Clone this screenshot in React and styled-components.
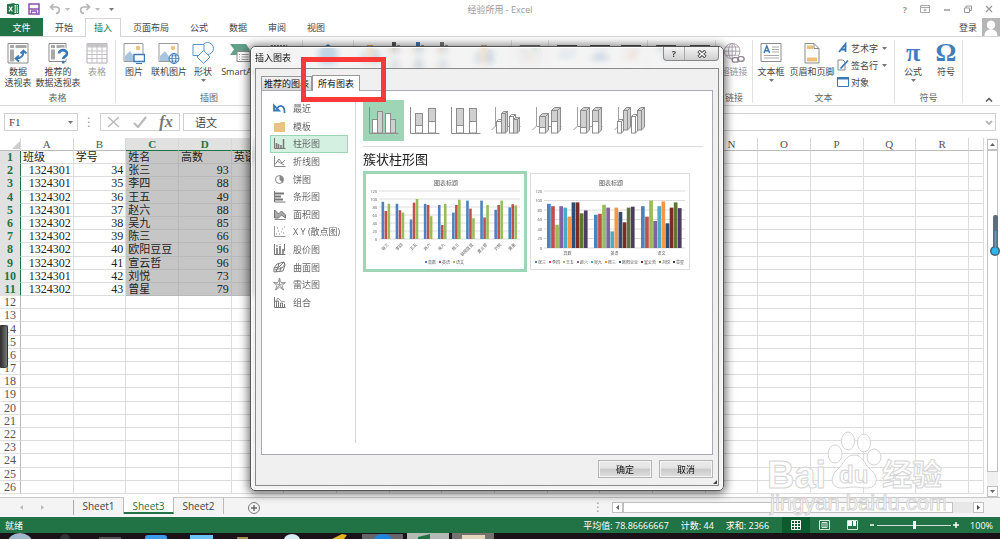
import { useState } from 'react';
import styled, { createGlobalStyle, css } from 'styled-components';

const uiFont = '"Open Sans", "Noto Sans CJK SC", sans-serif';
const cellFont = '"Liberation Serif", "Noto Sans CJK SC", serif';
const green = '#217346';

const columns = 'ABCDEFGHIJKLMNOPQR'.split('');
const rowNumbers = Array.from({ length: 26 }, (_, i) => i + 1);

const sheetData = [
  ['班级', '学号', '姓名', '高数', '英语'],
  [1324301, 34, '张三', 93],
  [1324301, 35, '李四', 88],
  [1324302, 36, '王五', 49],
  [1324301, 37, '赵六', 88],
  [1324302, 38, '吴九', 85],
  [1324302, 39, '陈三', 66],
  [1324302, 40, '欧阳豆豆', 96],
  [1324302, 41, '宣云哲', 96],
  [1324301, 42, '刘悦', 73],
  [1324302, 43, '曾星', 79],
];

const students = sheetData.slice(1).map((row) => row[2]);
const scores = [
  { name: '高数', values: [93, 88, 49, 88, 85, 66, 96, 96, 73, 79] },
  { name: '英语', values: [70, 72, 91, 85, 35, 85, 76, 54, 85, 87] },
  { name: '语文', values: [88, 66, 100, 57, 88, 98, 52, 85, 96, 84] },
];
const seriesColors = [
  '#4f81bd', '#c0504d', '#9bbb59', '#8064a2', '#4bacc6',
  '#f79646', '#2c4d75', '#772c2a', '#5f7530', '#4d3b62',
];

const menuTabs = ['开始', '插入', '页面布局', '公式', '数据', '审阅', '视图'];

const chartTypes = [
  { name: '最近', icon: 'recent' },
  { name: '模板', icon: 'folder' },
  { name: '柱形图', icon: 'column' },
  { name: '折线图', icon: 'line' },
  { name: '饼图', icon: 'pie' },
  { name: '条形图', icon: 'bar' },
  { name: '面积图', icon: 'area' },
  { name: 'X Y (散点图)', icon: 'scatter' },
  { name: '股价图', icon: 'stock' },
  { name: '曲面图', icon: 'surface' },
  { name: '雷达图', icon: 'radar' },
  { name: '组合', icon: 'combo' },
];

/* ---------- icons ---------- */

const Svg = ({ w, h = w, children }) => (
  <svg width={w} height={h} viewBox={`0 0 ${w} ${h}`} fill="none" aria-hidden="true">
    {children}
  </svg>
);

const PivotIcon = () => (
  <Svg w={22}>
    <path d="M1 1.500h20v19.500h-20z" fill="#fff" stroke="#8a8a8a" />
    <path d="M3 3h4v3h-4zM8.500 3h11v3h-11zM3 7.500h4v12h-4z" fill="#a8a8a8" />
    <path d="M9 16.500c5 0 7.500-2.500 7.500-7M13.500 11.500l3-3 3 3M12 13.500l-3.500 3 3.500 3" stroke="#3a78b8" strokeWidth="1.800" />
  </Svg>
);

const PivotHelpIcon = () => (
  <Svg w={22}>
    <path d="M2 1.500h17v18h-17z" fill="#fff" stroke="#8a8a8a" />
    <path d="M4 3h4v3h-4zM9.500 3h8v3h-8zM4 7.500h4v10h-4z" fill="#a8a8a8" />
    <path d="M11.500 11.500c0-5 8.500-4.500 8.500 0 0 3-3.800 2.800-3.800 6" stroke="#fff" strokeWidth="5" />
    <path d="M12 11.500c0-4.500 8-4.500 8 0 0 3-3.800 2.800-3.800 5.500M16.200 18.800v2.700" stroke="#3a78b8" strokeWidth="2.600" />
  </Svg>
);

const TableIcon = () => (
  <Svg w={22}>
    <path d="M1 1.500h20v19.500h-20z" fill="#fff" stroke="#b0aeb0" />
    <path d="M1 1.500h20v4h-20z" fill="#c9c5c9" />
    <path d="M1 9h20M1 12.500h20M1 16.500h20M6 1.500v19.500M11 1.500v19.500M16 1.500v19.500" stroke="#c4c0c4" />
  </Svg>
);

const PictureIcon = ({ online }) => (
  <Svg w={22}>
    <path d="M1 1.500h19v18h-19z" fill="#fff" stroke="#9a9a9a" />
    <circle cx="15" cy="6" r="2.200" fill="#eec17c" />
    <path d="M2 19v-5l5-5 7 10z" fill="#a9c4de" />
    {online ? (
      <g stroke="#3a78b8">
        <circle cx="16" cy="16.500" r="5" fill="#fff" />
        <ellipse cx="16" cy="16.500" rx="2" ry="5" />
        <path d="M11 16.500h10M12 13.800h8M12 19.200h8" strokeWidth=".7" />
      </g>
    ) : (
      <g>
        <path d="M11 12.500h10.500v7h-10.500z" fill="#fff" stroke="#3a78b8" strokeWidth="1.400" />
        <path d="M13 21.500h6" stroke="#3a78b8" />
      </g>
    )}
  </Svg>
);

const ShapesIcon = () => (
  <Svg w={24} h={22}>
    <g fill="#fff" stroke="#5b92c9">
      <circle cx="16.500" cy="6.500" r="6" />
      <path d="M2 2.500h11v11h-11z" />
      <path d="M12.500 8.500l6.500 6.500-6.500 6.500-6.500-6.500z" />
    </g>
  </Svg>
);

const SmartArtIcon = () => (
  <Svg w={22}>
    <path d="M1 2h16l4 6-4 5h-16l4-5.500z" fill="#62a18a" />
    <path d="M8 9.500h13v10h-13z" fill="#fff" stroke="#8a8a8a" />
    <path d="M10 12.500h1M12.500 12.500h7M10 15h1M12.500 15h7M10 17.500h1M12.500 17.500h7" stroke="#8a8a8a" strokeWidth=".8" />
  </Svg>
);

const ScreenshotIcon = () => (
  <Svg w={20} h={22}>
    <path d="M2 1.500h16v16h-16z" stroke="#777" strokeDasharray="2 1" />
    <path d="M6 9h8v5h-8z" fill="#bbb" />
  </Svg>
);

const StoreIcon = () => (
  <Svg w={22}>
    <path d="M1 7l10-7 10 7-2 13h-16z" fill="#3f8fca" />
  </Svg>
);

const BigChartIcon = () => (
  <Svg w={22}>
    <path d="M1 8h5v12h-5z" fill="#82a9cf" />
    <path d="M7 1h6v19h-6z" fill="#e4b468" />
    <path d="M14 6h5v14h-5z" fill="#3f79b4" />
  </Svg>
);

const MiniChartIcon = ({ accent }) => (
  <Svg w={12}>
    <path d="M0 5h3v6h-3z" fill="#e4b468" />
    <path d="M4 0h4v11h-4z" fill={accent} />
    <path d="M9 3h3v8h-3z" fill="#999" />
  </Svg>
);

const MapIcon = () => (
  <Svg w={22}>
    <path d="M1 1.500h20v17h-20z" fill="#fff" stroke="#777" />
    <path d="M4 6h4v4h-4zM13 4h5v5h-5z" fill="#6fb594" />
    <path d="M8 10h5v5h-5z" fill="#e3a46d" />
  </Svg>
);

const SparkIcon = ({ color, d }) => (
  <Svg w={22}>
    <path d="M1 2h20" stroke="#555" strokeWidth="2" />
    <path d={d} stroke={color} strokeWidth="3" />
  </Svg>
);

const LinkIcon = () => (
  <Svg w={24} h={24}>
    <g stroke="#a79da7">
      <circle cx="10" cy="10" r="8.500" />
      <ellipse cx="10" cy="10" rx="4" ry="8.500" />
      <path d="M1.500 10h17M3 5.500h14M3 14.500h14M10 1.500v17" />
    </g>
    <path d="M12 20a2.500 2.500 0 0 1 2.500-3h2a2.500 2.500 0 0 1 1.500 4M23 19a2.500 2.500 0 0 1-2.500 3h-2a2.500 2.500 0 0 1-1.500-4" stroke="#fff" strokeWidth="4" />
    <rect x="10" y="17" width="7" height="5" rx="2.500" stroke="#8f858f" strokeWidth="1.500" />
    <rect x="16" y="16" width="7" height="5" rx="2.500" stroke="#8f858f" strokeWidth="1.500" />
  </Svg>
);

const TextBoxIcon = () => (
  <Svg w={22}>
    <path d="M1 1.500h20v18h-20z" fill="#fff" stroke="#8a8a8a" />
    <path d="M4 11l2.800-7 2.800 7M5 8.700h3.600" stroke="#3a78b8" strokeWidth="1.400" />
    <path d="M12 5h7M12 7.500h7M12 10h7M4 13.500h15M4 16h15" stroke="#aaa" />
  </Svg>
);

const HeaderIcon = () => (
  <Svg w={18} h={22}>
    <path d="M2 1.500h9l5 5v14.500h-14z" fill="#fff" stroke="#8a8a8a" />
    <path d="M11 1.500v5h5" stroke="#8a8a8a" />
    <path d="M4 3.500h6v3.500h-6zM4 15.500h10v4h-10z" fill="#ecc07a" />
  </Svg>
);

const WordArtIcon = () => (
  <Svg w={12}>
    <path d="M2 10l6.500-8v8M4.500 7.500h4" stroke="#3a78b8" strokeWidth="1.800" />
  </Svg>
);

const SignIcon = () => (
  <Svg w={12}>
    <path d="M1 1h5l2 2v8h-7z" fill="#fff" stroke="#888" />
    <path d="M3.500 9.500l7.500-8" stroke="#3a78b8" strokeWidth="1.800" />
  </Svg>
);

const ObjectIcon = () => (
  <Svg w={12}>
    <path d="M.5 1.500h11v9h-11z" fill="#fff" stroke="#3a78b8" />
    <path d="M0 1h12v2.500h-12z" fill="#3a78b8" />
  </Svg>
);

const ExcelIcon = () => (
  <Svg w={12}>
    <path d="M7 1.500h4.500v9h-4.500" fill="#fff" stroke={green} />
    <path d="M7 4h4.500M7 6h4.500M7 8h4.500M9.500 1.500v9" stroke={green} strokeWidth=".7" />
    <path d="M0 1.200l7.500-1.200v12l-7.500-1.200z" fill={green} />
    <path d="M2 3.700l3.400 4.600M5.400 3.700l-3.400 4.600" stroke="#fff" strokeWidth="1.100" />
  </Svg>
);

const SaveIcon = () => (
  <Svg w={12}>
    <path d="M1 1h10v10h-10z" stroke="#8a4fb0" strokeWidth="1.500" />
    <path d="M1 6h10M3.500 11v-3h5v3" stroke="#8a4fb0" strokeWidth="1.300" />
  </Svg>
);

const UndoIcon = () => (
  <Svg w={12}>
    <path d="M4.500 1l-3 3 3 3M1.500 4h5.500c5 0 4 6 0 6.500" stroke="#b3b3b3" strokeWidth="1.600" />
  </Svg>
);

const RedoIcon = () => (
  <Svg w={12}>
    <path d="M7.500 1l3 3-3 3M10.500 4h-5.500c-5 0-4 6 0 6.500" stroke="#b3b3b3" strokeWidth="1.600" />
  </Svg>
);

const Caret = ({ color = '#777' }) => (
  <Svg w={5} h={3}>
    <path d="M0 0h5l-2.500 3z" fill={color} />
  </Svg>
);

const typeIconShapes = {
  recent: (
    <path d="M1 3.500v5h5zM4 6.500c3-4.500 8-3 7.500 4.500" fill="none" stroke="#3a78b8" strokeWidth="1.800" />
  ),
  folder: <path d="M1 3h6l1-1h4v10h-11z" fill="#eac282" />,
  column: (
    <>
      <path d="M1.500 1v10.500h11" stroke="#777" />
      <path d="M3.500 11v-5M5.500 11v-4M8 11v-3M10.500 11v-9" stroke="#777" strokeWidth="1.500" />
    </>
  ),
  line: <path d="M1.500 1v10.500h11M2 9.500l4-5.500 3 4 3-3M4 6l7 4" stroke="#888" />,
  pie: (
    <>
      <circle cx="6.500" cy="6.500" r="4" stroke="#888" />
      <path d="M6.500 6.500v-4a4 4 0 0 1 2.500 7z" fill="#888" />
    </>
  ),
  bar: (
    <>
      <path d="M1.500 1v11h11" stroke="#777" />
      <path d="M2 3.500h9M2 6.500h6M2 9.500h8" stroke="#777" strokeWidth="1.800" />
    </>
  ),
  area: (
    <>
      <path d="M1.500 11.500h11" stroke="#888" />
      <path d="M1.500 10v-8l4 4 3-3 4 4v3l-4-3-3 3z" fill="#aaa" stroke="#777" />
    </>
  ),
  scatter: (
    <>
      <path d="M1.500 1v10.500h11" stroke="#999" />
      <path d="M3 9h1M5 6h1M6 9h1M8 7h1M9 4h1M11 2h1M4 3h1M10 8h1" stroke="#888" strokeWidth="1.200" />
    </>
  ),
  stock: (
    <>
      <path d="M1.500 1v10.500h11" stroke="#777" />
      <path d="M4 11v-6M7 11v-8M10 11v-5" stroke="#777" strokeWidth="1.600" />
      <path d="M4 4v-2M7 2v-1M11.500 8v-7" stroke="#777" />
    </>
  ),
  surface: (
    <path d="M1 11v-4l3-4 7-2 1 3-2 6zM1 7l5-1 5-5M2 9l7-2 3-4M3 11l2-5 1-4M7 10l1-4" stroke="#777" />
  ),
  radar: (
    <path d="M6.500 0l1.500 4.500h4.500l-3.500 3 1.500 4.500-4-2.800-4 2.800 1.500-4.500-3.500-3h4.500zM6.500 0v7M1 4.500l5.500 2.500 5.500-2.500M2.500 12l4-5 4 5" stroke="#888" strokeWidth=".8" />
  ),
  combo: (
    <>
      <path d="M1.500 1v10.500h11" stroke="#777" />
      <path d="M3.500 11v-6h2v6M7.500 11v-4h2v4M11.500 11v-3" stroke="#777" />
      <path d="M2 6l3-4 3 3 4 1" stroke="#999" />
    </>
  ),
};

const grayFill = '#d0d0d0';

const FlatBar = ({ x, y, w, split, bottom = 33, fill = '#fff' }) => (
  <g stroke="#8c8c8c">
    <rect x={x} y={y} width={w} height={bottom - y} fill={fill} />
    {split && <rect x={x} y={y} width={w} height={split - y} fill={grayFill} />}
  </g>
);

const SolidBar = ({ x, y, w, split, bottom = 33, depth = 3, fill = '#fff' }) => (
  <g>
    <FlatBar x={x} y={y} w={w} split={split} bottom={bottom} fill={fill} />
    <path
      d={`M${x} ${y}l${depth}-${depth}h${w}l-${depth} ${depth}zM${x + w} ${y}l${depth}-${depth}v${bottom - y}l-${depth} ${depth}z`}
      fill={fill === '#fff' && !split ? '#fff' : grayFill}
      stroke="#8c8c8c"
    />
  </g>
);

const flatAxis = <path d="M6.500 7v26.500h29" stroke="#8c8c8c" />;
const deepAxis = <path d="M9.500 7v19l-4 4M9.500 26.500h25" stroke="#a0a0a0" />;

const subtypes = [
  {
    name: '簇状柱形图',
    art: (
      <>
        {flatAxis}
        <FlatBar x={9.5} y={19.5} w={5} />
        <FlatBar x={14.5} y={11.5} w={5} fill={grayFill} />
        <FlatBar x={22.5} y={13.5} w={5} />
        <FlatBar x={27.5} y={19.5} w={5} fill={grayFill} />
      </>
    ),
  },
  {
    name: '堆积柱形图',
    art: (
      <>
        {flatAxis}
        <FlatBar x={11.5} y={13.5} w={7} split={25.5} />
        <FlatBar x={24.5} y={8.5} w={7} split={21.5} />
      </>
    ),
  },
  {
    name: '百分比堆积柱形图',
    art: (
      <>
        {flatAxis}
        <FlatBar x={11.5} y={8.5} w={7} split={25.5} />
        <FlatBar x={24.5} y={8.5} w={7} split={21.5} />
      </>
    ),
  },
  {
    name: '三维簇状柱形图',
    art: (
      <>
        {deepAxis}
        <SolidBar x={10.5} y={21.5} w={5} depth={2} />
        <SolidBar x={15.5} y={13.5} w={4} depth={2} fill={grayFill} />
        <SolidBar x={23.5} y={16.5} w={4} depth={2} />
        <SolidBar x={27.5} y={19.5} w={4} depth={2} fill={grayFill} />
      </>
    ),
  },
  {
    name: '三维堆积柱形图',
    art: (
      <>
        {deepAxis}
        <SolidBar x={12.5} y={16.5} w={6} split={27.5} />
        <SolidBar x={24.5} y={10.5} w={6} split={21.5} />
      </>
    ),
  },
  {
    name: '三维百分比堆积柱形图',
    art: (
      <>
        {deepAxis}
        <SolidBar x={12.5} y={10.5} w={6} split={27.5} />
        <SolidBar x={24.5} y={10.5} w={6} split={21.5} />
      </>
    ),
  },
  {
    name: '三维柱形图',
    art: (
      <>
        {deepAxis}
        <SolidBar x={14.5} y={10.5} w={4} bottom={30} fill={grayFill} />
        <SolidBar x={8.5} y={21.5} w={4} depth={2} />
        <SolidBar x={28.5} y={10.5} w={4} bottom={30} fill={grayFill} />
        <SolidBar x={22.5} y={16.5} w={4} depth={2} />
      </>
    ),
  },
];

/* ---------- chart preview ---------- */

// One group of bars per label, one colour per series
const PreviewChart = ({ labels, series, baseline, step, barWidth, slanted }) => {
  const left = 13;
  const slot = 141 / labels.length;
  const start = (slot - barWidth * series.length) / 2;
  const legendWidths = series.map((item) => item.name.length * 4 + 6);
  const legendTotal = legendWidths.reduce((sum, w) => sum + w, 0);
  const legendX = (j) => (160 - legendTotal) / 2 + legendWidths.slice(0, j).reduce((sum, w) => sum + w, 0);

  return (
    <PreviewSvg viewBox="0 0 158 95" aria-hidden="true">
      <text x="80" y="11" textAnchor="middle" fontSize="6">图表标题</text>
      {[0, 20, 40, 60, 80, 100, 120].map((tick, i) => (
        <g key={tick}>
          <path d={`M${left} ${baseline - i * step}h141`} stroke="#dcdcdc" />
          <text x="11" y={baseline - i * step + 1.5} textAnchor="end" fontSize="4">{tick}</text>
        </g>
      ))}
      {labels.map((label, i) => (
        <g key={label}>
          {series.map((item, j) => {
            const height = (item.values[i] * step) / 20;
            return (
              <rect
                key={item.name}
                x={left + i * slot + start + j * barWidth}
                y={baseline - height}
                width={barWidth - 0.4}
                height={height}
                fill={seriesColors[j]}
              />
            );
          })}
          {slanted ? (
            <text
              fontSize="4"
              textAnchor="end"
              transform={`translate(${left + (i + 0.7) * slot} ${baseline + 6}) rotate(-45)`}
            >
              {label}
            </text>
          ) : (
            <text x={left + (i + 0.5) * slot} y={baseline + 7} textAnchor="middle" fontSize="4">
              {label}
            </text>
          )}
        </g>
      ))}
      {series.map((item, j) => (
        <g key={item.name}>
          <rect x={legendX(j)} y="87" width="2" height="2" fill={seriesColors[j]} />
          <text x={legendX(j) + 3} y="90" fontSize="4">{item.name}</text>
        </g>
      ))}
    </PreviewSvg>
  );
};

/* ---------- page parts ---------- */

const RibbonItem = ({ icon, lines, width, muted, arrow, name }) => (
  <BigButton $width={width} $muted={muted} aria-label={name}>
    {icon}
    {lines && <span>{lines.map((line) => <span key={line}>{line}</span>)}</span>}
    {arrow && <Caret />}
  </BigButton>
);

const Ribbon = () => (
  <RibbonBar>
    <Group $width={116}>
      <GroupItems>
        <RibbonItem width={36} icon={<PivotIcon />} lines={['数据', '透视表']} />
        <RibbonItem width={44} icon={<PivotHelpIcon />} lines={['推荐的', '数据透视表']} />
        <RibbonItem width={34} icon={<TableIcon />} lines={['表格']} muted />
      </GroupItems>
      <GroupName>表格</GroupName>
    </Group>
    <Group $width={187}>
      <GroupItems>
        <RibbonItem width={36} icon={<PictureIcon />} lines={['图片']} />
        <RibbonItem width={34} icon={<PictureIcon online />} lines={['联机图片']} />
        <RibbonItem width={34} icon={<ShapesIcon />} lines={['形状']} arrow />
        <RibbonItem width={40} icon={<SmartArtIcon />} lines={['SmartArt']} />
        <RibbonItem width={38} icon={<ScreenshotIcon />} name="屏幕截图" />
      </GroupItems>
      <GroupName>插图</GroupName>
    </Group>
    <Group $width={51}>
      <GroupItems>
        <RibbonItem width={50} icon={<StoreIcon />} name="应用程序" />
      </GroupItems>
    </Group>
    <Group $width={158}>
      <GroupItems>
        <RibbonItem width={34} icon={<BigChartIcon />} name="推荐的图表" />
        <MiniGrid>
          {['#555', '#3f79b4', '#777', '#82a9cf', '#3f79b4', '#82a9cf'].map((accent, i) => (
            <SmallButton key={i} aria-label={`图表 ${i + 1}`}>
              <MiniChartIcon accent={accent} />
            </SmallButton>
          ))}
        </MiniGrid>
        <RibbonItem width={50} icon={<BigChartIcon />} name="数据透视图" />
      </GroupItems>
    </Group>
    <Group $width={37}>
      <GroupItems>
        <RibbonItem width={36} icon={<MapIcon />} name="Power View" />
      </GroupItems>
    </Group>
    <Group $width={99}>
      <GroupItems>
        <RibbonItem width={36} icon={<SparkIcon color="#82a9cf" d="M2 14l5-4 5 3 7-5" />} name="折线图" />
        <RibbonItem width={30} icon={<SparkIcon color="#3f79b4" d="M2 14h18M7 11h9" />} name="柱形图" />
        <RibbonItem width={32} icon={<SparkIcon color="#dd7c66" d="M3 13h4M10 9h8M10 14h5" />} name="盈亏" />
      </GroupItems>
    </Group>
    <Group $width={68}>
      <GroupItems>
        <RibbonItem width={36} icon={<SparkIcon color="#9bb9d6" d="M2 6h18M6 12h10" />} name="切片器" />
        <RibbonItem width={31} icon={<SparkIcon color="#aaa" d="M2 6h18M6 12h10" />} name="日程表" />
      </GroupItems>
    </Group>
    <Group $width={37}>
      <GroupItems>
        <RibbonItem width={36} icon={<LinkIcon />} lines={['超链接']} muted />
      </GroupItems>
      <GroupName>链接</GroupName>
    </Group>
    <Group $width={142}>
      <GroupItems>
        <RibbonItem width={36} icon={<TextBoxIcon />} lines={['文本框']} arrow />
        <RibbonItem width={46} icon={<HeaderIcon />} lines={['页眉和页脚']} />
        <SmallList>
          <SmallButton><WordArtIcon />艺术字<Caret /></SmallButton>
          <SmallButton><SignIcon />签名行<Caret /></SmallButton>
          <SmallButton><ObjectIcon />对象</SmallButton>
        </SmallList>
      </GroupItems>
      <GroupName>文本</GroupName>
    </Group>
    <Group $width={68}>
      <GroupItems>
        <RibbonItem width={36} icon={<Glyph>π</Glyph>} lines={['公式']} arrow />
        <RibbonItem width={30} icon={<Glyph>Ω</Glyph>} lines={['符号']} />
      </GroupItems>
      <GroupName>符号</GroupName>
    </Group>
    <CollapseButton aria-label="折叠功能区">
      <Svg w={8} h={5}><path d="M1 4.500l3-3 3 3" stroke="#555" strokeWidth="1.500" /></Svg>
    </CollapseButton>
  </RibbonBar>
);

const isSelected = (col, row) => col >= 2 && col <= 5 && row <= 11;

const Sheet = () => (
  <SheetArea>
    <GridPane>
      <Grid>
        <colgroup>
          <RowHeadCol />
          {columns.map((name) => <col key={name} />)}
          <EdgeCol />
        </colgroup>
        <thead>
          <tr>
            <Corner aria-label="全选">
              <Svg w={9}><path d="M9 1v8h-8z" fill="#ccc" /></Svg>
            </Corner>
            {columns.map((name, i) => (
              <ColHead key={name} scope="col" $on={isSelected(i, 1)}>{name}</ColHead>
            ))}
            <ColHead as="td" />
          </tr>
        </thead>
        <tbody>
          {rowNumbers.map((row) => (
            <tr key={row}>
              <RowHead scope="row" $on={row <= 11}>{row}</RowHead>
              {columns.map((name, i) => {
                const value = sheetData[row - 1]?.[i];
                return (
                  <Cell key={name} $on={isSelected(i, row)} $number={typeof value === 'number'}>
                    {value}
                  </Cell>
                );
              })}
              <Cell />
            </tr>
          ))}
        </tbody>
      </Grid>
    </GridPane>
    <VerticalScroll>
      <ScrollButton aria-label="向上滚动">
        <Svg w={5} h={3}><path d="M0 3h5l-2.500-3z" fill="#666" /></Svg>
      </ScrollButton>
      <VerticalThumb />
      <ScrollButton aria-label="向下滚动"><Caret color="#666" /></ScrollButton>
    </VerticalScroll>
  </SheetArea>
);

const ChartDialog = () => {
  const [type, setType] = useState('柱形图');
  const [subtype, setSubtype] = useState('簇状柱形图');

  return (
    <Dialog role="dialog" aria-label="插入图表">
      <DialogTitle>
        <span>插入图表</span>
        <WindowButtons>
          <button aria-label="帮助">?</button>
          <button aria-label="关闭">
            <Svg w={10} h={8}>
              <path d="M1.500 1l7 6M8.500 1l-7 6" stroke="#555" strokeWidth="3.500" />
              <path d="M2 1.500l6 5M8 1.500l-6 5" stroke="#fff" strokeWidth="1.500" />
            </Svg>
          </button>
        </WindowButtons>
      </DialogTitle>
      <DialogBody>
        <DialogTabs role="tablist">
          <DialogTab role="tab" aria-selected="false">推荐的图表</DialogTab>
          <DialogTab role="tab" aria-selected="true" $active>所有图表</DialogTab>
          <Highlight />
        </DialogTabs>
        <Panel>
          <TypeList>
            {chartTypes.map((item) => (
              <TypeButton key={item.name} $active={item.name === type} onClick={() => setType(item.name)}>
                <Svg w={13}>{typeIconShapes[item.icon]}</Svg>
                {item.name}
              </TypeButton>
            ))}
          </TypeList>
          <TypeDetail>
            <SubtypeRow>
              {subtypes.map((item) => (
                <SubtypeButton
                  key={item.name}
                  aria-label={item.name}
                  $active={item.name === subtype}
                  onClick={() => setSubtype(item.name)}
                >
                  <Svg w={41}>{item.art}</Svg>
                </SubtypeButton>
              ))}
            </SubtypeRow>
            <SubtypeName>{subtype}</SubtypeName>
            <Previews>
              <PreviewButton $active aria-label="按学生预览">
                <PreviewChart labels={students} series={scores} baseline={65} step={8} barWidth={3} slanted />
              </PreviewButton>
              <PreviewButton aria-label="按科目预览">
                <PreviewChart
                  labels={scores.map((s) => s.name)}
                  series={students.map((name, i) => ({ name, values: scores.map((s) => s.values[i]) }))}
                  baseline={74}
                  step={9.5}
                  barWidth={4.1}
                />
              </PreviewButton>
            </Previews>
          </TypeDetail>
        </Panel>
        <DialogFooter>
          <DialogButton>确定</DialogButton>
          <DialogButton>取消</DialogButton>
        </DialogFooter>
        <ResizeGrip />
      </DialogBody>
    </Dialog>
  );
};

const Watermark = () => (
  <WatermarkSvg viewBox="0 0 180 90" aria-hidden="true">
    <g fill="#fff" fillOpacity=".8" stroke="#d4d4d4">
      <text x="1" y="58" fontSize="38" fontWeight="bold">Bai</text>
      <ellipse cx="69" cy="24" rx="7" ry="9" />
      <ellipse cx="82" cy="11" rx="6.500" ry="9" />
      <ellipse cx="98" cy="13" rx="6.500" ry="9" />
      <ellipse cx="108" cy="27" rx="7" ry="8" />
      <path d="M88 25c9 0 10 9 16 14 10 8 7 19-3 19-6 0-8-1-13-1s-7 1-13 1c-10 0-12-11-3-19 6-5 7-14 16-14z" />
      <text x="73" y="53" fontSize="24" fontWeight="bold">du</text>
      <text x="116" y="55" fontSize="30" fontWeight="bold">经验</text>
      <text x="4" y="80" fontSize="22">jingyan.baidu.com</text>
    </g>
  </WatermarkSvg>
);

export default function App() {
  return (
    <>
      <GlobalStyle />
      <Window>
        <TitleBar>
          <QuickAccess>
            <ExcelIcon />
            <IconButton aria-label="保存"><SaveIcon /></IconButton>
            <IconButton aria-label="撤消"><UndoIcon /><Caret color="#bbb" /></IconButton>
            <IconButton aria-label="恢复"><RedoIcon /><Caret color="#bbb" /></IconButton>
            <IconButton aria-label="自定义快速访问工具栏"><Caret /></IconButton>
          </QuickAccess>
          <span>经验所用 - Excel</span>
          <WindowTools>
            <IconButton aria-label="帮助"><b>?</b></IconButton>
            <IconButton aria-label="功能区显示选项">
              <Svg w={10} h={8}><path d="M.5.5h9v7h-9zM.5 2.500h9M5 6.500v-3M3.500 5h3" stroke="#aaa" /></Svg>
            </IconButton>
            <IconButton aria-label="最小化">
              <Svg w={8}><path d="M1 5h6" stroke="#999" strokeWidth="1.500" /></Svg>
            </IconButton>
            <IconButton aria-label="还原">
              <Svg w={8}><path d="M.5 3h5v4.500h-5zM2 3v-2h5.500v4.500h-2" stroke="#999" /></Svg>
            </IconButton>
            <IconButton aria-label="关闭">
              <Svg w={8}><path d="M1 1l6 6M7 1l-6 6" stroke="#999" strokeWidth="1.300" /></Svg>
            </IconButton>
          </WindowTools>
        </TitleBar>
        <MenuBar>
          <FileTab>文件</FileTab>
          {menuTabs.map((name) => (
            <MenuTab key={name} $active={name === '插入'}>{name}</MenuTab>
          ))}
          <SignIn href="#">
            登录
            <Svg w={18}>
              <path d="M0 0h18v18h-18z" fill="#b5b5b5" />
              <path d="M9 2.500c6 0 5 9 0 9s-6-9 0-9zM2.500 18c0-5 3-6.500 6.500-6.500s6.500 1.500 6.500 6.500z" fill="#fff" />
            </Svg>
          </SignIn>
        </MenuBar>
        <Ribbon />
        <FormulaBar>
          <NameBox>
            <input aria-label="名称框" defaultValue="F1" />
            <Caret />
          </NameBox>
          <Dots>⋮</Dots>
          <FormulaTools>
            <IconButton aria-label="取消">
              <Svg w={13} h={12}><path d="M1 1l11 10M12 1l-11 10" stroke="#bbb" strokeWidth="1.600" /></Svg>
            </IconButton>
            <IconButton aria-label="输入">
              <Svg w={14} h={12}><path d="M1 7l4 4 8-10" stroke="#bbb" strokeWidth="2.200" /></Svg>
            </IconButton>
            <IconButton aria-label="插入函数"><FxLabel>fx</FxLabel></IconButton>
          </FormulaTools>
          <FormulaBox>
            <input aria-label="编辑栏" defaultValue="语文" />
            <Svg w={8} h={5}><path d="M1 1l3 3 3-3" stroke="#bbb" strokeWidth="2" /></Svg>
          </FormulaBox>
        </FormulaBar>
        <Sheet />
        <SheetBar>
          <SheetNav>
            <IconButton aria-label="上一个工作表">
              <Svg w={3} h={5}><path d="M3 0v5l-3-2.500z" fill="#bbb" /></Svg>
            </IconButton>
            <IconButton aria-label="下一个工作表">
              <Svg w={3} h={5}><path d="M0 0v5l3-2.500z" fill="#bbb" /></Svg>
            </IconButton>
          </SheetNav>
          <SheetTab>Sheet1</SheetTab>
          <SheetTab $active>Sheet3</SheetTab>
          <SheetTab>Sheet2</SheetTab>
          <AddSheet aria-label="新工作表">
            <Svg w={12}>
              <circle cx="6" cy="6" r="5.500" stroke="#777" />
              <path d="M6 3v6M3 6h6" stroke="#666" strokeWidth="1.400" />
            </Svg>
          </AddSheet>
          <Dots>⋮</Dots>
          <HorizontalScroll>
            <ScrollButton aria-label="向左滚动">
              <Svg w={3} h={5}><path d="M3 0v5l-3-2.500z" fill="#666" /></Svg>
            </ScrollButton>
            <HorizontalThumb />
            <ScrollButton aria-label="向右滚动">
              <Svg w={3} h={5}><path d="M0 0v5l3-2.500z" fill="#444" /></Svg>
            </ScrollButton>
          </HorizontalScroll>
        </SheetBar>
        <StatusBar>
          <Ready>就绪</Ready>
          <Stats>
            <span>平均值: 78.86666667</span>
            <span>计数: 44</span>
            <span>求和: 2366</span>
          </Stats>
          <ViewButton $active aria-label="普通">
            <Svg w={10}><path d="M.5.5h9v9h-9zM.5 3.500h9M.5 6.500h9M3.500.5v9M6.500.5v9" stroke="#fff" /></Svg>
          </ViewButton>
          <ViewButton aria-label="页面布局">
            <Svg w={11} h={10}><path d="M.5.5h10v9h-10zM3 2.500h5v5h-5zM4 4h3M4 6h3" stroke="#d5e6dc" /></Svg>
          </ViewButton>
          <ViewButton aria-label="分页预览">
            <Svg w={11} h={10}><path d="M.5.5h10v9h-10z" stroke="#d5e6dc" /><path d="M1 1h4v5h-4zM6 1h3v5h-3z" fill="#fff" /></Svg>
          </ViewButton>
          <Zoom>
            <IconButton aria-label="缩小">
              <Svg w={6}><path d="M1 3h4" stroke="#fff" strokeWidth="1.500" /></Svg>
            </IconButton>
            <ZoomSlider type="range" min="10" max="190" defaultValue="100" aria-label="显示比例" />
            <IconButton aria-label="放大">
              <Svg w={6}><path d="M0 3h6M3 0v6" stroke="#fff" strokeWidth="1.500" /></Svg>
            </IconButton>
          </Zoom>
          <span>100%</span>
        </StatusBar>
        <Taskbar>
          <svg width="500" height="6" viewBox="0 0 500 6" aria-hidden="true">
            <ellipse cx="20" cy="9" rx="12" ry="9" fill="#9fb8cc" />
            <circle cx="65" cy="6" r="5" fill="#333" />
            <path d="M99 4h22v2h-22z" fill="#555" />
            <rect x="145" y="2" width="22" height="8" rx="3" fill="#3c9be8" />
            <path d="M190 2h23v4h-23z" fill="#6cc3f5" />
            <path d="M237 4h11v2h-11z" fill="#a98f4c" />
            <ellipse cx="292" cy="7" rx="8" ry="6" fill="#d9ecf4" />
            <path d="M332 6l10-5 5 1-3 4z" fill="#e3b21f" />
            <path d="M362 1h41v5h-41z" fill="#67656b" />
            <ellipse cx="383" cy="7" rx="9" ry="6" fill="#1f86dd" />
            <path d="M407 0h42v6h-42z" fill="#b5b9b6" />
            <path d="M418 4l12-3v5h-12z" fill={green} />
            <path d="M452 0h42v6h-42z" fill="#77716f" />
            <path d="M462 2h23v4h-23z" fill="#e6d6be" />
          </svg>
          <Clock>11:19</Clock>
        </Taskbar>
        <ChartDialog />
        <SideHandle />
        <Watermark />
        <Thermometer>
          <Svg w={10} h={42}>
            <rect x="3" y="0" width="5" height="38" rx="2" fill="#5d6f7e" />
            <circle cx="5" cy="36" r="5" fill="#4a5d6c" />
            <circle cx="5" cy="36" r="3.500" fill="#2fb5ea" />
            <path d="M5.500 16v20" stroke="#2fb5ea" strokeWidth="1.500" />
          </Svg>
        </Thermometer>
      </Window>
    </>
  );
}

/* ---------- styles ---------- */

const GlobalStyle = createGlobalStyle`
  * {
    box-sizing: border-box;
  }

  body {
    margin: 0;
    overflow: hidden;
  }

  button,
  input {
    font: inherit;
    color: inherit;
    margin: 0;
    padding: 0;
    border: 0;
    background: none;
  }

  button {
    white-space: nowrap;
  }

  svg {
    display: block;
    flex: none;
  }
`;

const Window = styled.div`
  position: relative;
  height: 100vh;
  display: flex;
  flex-direction: column;
  overflow: hidden;
  background: #fff;
  color: #444;
  font: 9px/11px ${uiFont};
`;

const TitleBar = styled.header`
  height: 18px;
  flex: none;
  display: grid;
  grid-template-columns: 1fr auto 1fr;
  align-items: center;
  padding: 0 7px;
  color: #999;
`;

const IconButton = styled.button`
  display: flex;
  align-items: center;
  gap: 4px;
`;

const QuickAccess = styled.div`
  display: flex;
  align-items: center;
  gap: 9px;
`;

const WindowTools = styled.div`
  display: flex;
  align-items: center;
  justify-content: flex-end;
  gap: 13px;
`;

const MenuBar = styled.nav`
  height: 18px;
  flex: none;
  display: flex;
  gap: 3px;
`;

const FileTab = styled.button`
  width: 43px;
  background: ${green};
  color: #fff;
`;

const MenuTab = styled.button`
  padding: 0 9px;
  ${({ $active }) =>
    $active &&
    css`
      position: relative;
      z-index: 1;
      margin-bottom: -1px;
      background: #fff;
      color: ${green};
      box-shadow: inset 1px 1px #d5d5d5, inset -1px 0 #d5d5d5;
    `}
`;

const SignIn = styled.a`
  margin-left: auto;
  display: flex;
  align-items: center;
  gap: 5px;
  color: #444;
  text-decoration: none;
`;

const RibbonBar = styled.div`
  height: 70px;
  flex: none;
  display: flex;
  border-top: 1px solid #d5d5d5;
  border-bottom: 1px solid #d5d5d5;
`;

const Group = styled.section`
  width: ${({ $width }) => $width}px;
  flex: none;
  display: flex;
  flex-direction: column;
  justify-content: space-between;
  margin: 3px 0 2px;
  border-right: 1px solid #e1e1e1;
`;

const GroupItems = styled.div`
  display: flex;
`;

const GroupName = styled.div`
  text-align: center;
  color: #666;
`;

const BigButton = styled.button`
  width: ${({ $width }) => $width}px;
  flex: none;
  display: flex;
  flex-direction: column;
  align-items: center;
  padding-top: 2px;
  color: ${({ $muted }) => ($muted ? '#999' : '#444')};

  > svg:first-child {
    margin-bottom: 2px;
    height: 22px;
  }

  > span > span {
    display: block;
  }

  > svg:last-child {
    margin-top: 2px;
  }
`;

const Glyph = styled.b`
  height: 24px;
  color: #3f7fbe;
  font: bold 26px/21px "Liberation Serif", serif;
`;

const MiniGrid = styled.div`
  display: grid;
  grid-template-columns: repeat(3, 24px);
  row-gap: 4px;
  align-content: start;
  padding-top: 2px;
`;

const SmallList = styled.div`
  display: flex;
  flex-direction: column;
  gap: 5px;
  padding: 2px 0 0 2px;
`;

const SmallButton = styled.button`
  height: 12px;
  display: flex;
  align-items: center;
  gap: 2px;

  > svg:nth-child(2) {
    margin-left: 2px;
  }
`;

const CollapseButton = styled.button`
  margin: auto 7px 3px auto;
`;

const FormulaBar = styled.div`
  height: 32px;
  flex: none;
  display: grid;
  grid-template-columns: 74px 22px 80px 1fr;
  padding: 7px 4px;
  font-size: 11px;
`;

const NameBox = styled.div`
  display: flex;
  align-items: center;
  justify-content: space-between;
  padding: 0 4px;
  border: 1px solid #d0d0d0;
  font: 11px/16px ${cellFont};

  input {
    width: 50px;
  }
`;

const Dots = styled.span`
  text-align: center;
  color: #999;
  font: 12px/18px "DejaVu Sans", sans-serif;
`;

const FormulaTools = styled.div`
  display: flex;
  align-items: center;
  justify-content: space-around;
  border: 1px solid #d0d0d0;
`;

const FxLabel = styled.i`
  font: italic bold 16px/16px "Liberation Serif", serif;
  color: #777;
`;

const FormulaBox = styled.div`
  display: flex;
  align-items: center;
  margin-left: 3px;
  padding: 0 2px 0 11px;
  border: 1px solid #d0d0d0;

  input {
    flex: 1;
    min-width: 0;
  }
`;

const SheetArea = styled.main`
  flex: 1;
  min-height: 0;
  display: flex;
  gap: 3px;
  padding-right: 2px;
`;

const GridPane = styled.div`
  flex: 1;
  min-width: 0;
`;

const Grid = styled.table`
  width: 100%;
  height: calc(100% - 3px);
  table-layout: fixed;
  border-collapse: separate;
  border-spacing: 0;
  font: 11px/12px ${cellFont};
  color: #222;

  th,
  td {
    padding: 0;
    white-space: nowrap;
  }
`;

const RowHeadCol = styled.col`
  width: 21px;
`;

const EdgeCol = styled.col`
  width: 15px;
`;

const Corner = styled.th`
  height: 13px;
  border-right: 1px solid #d8d8d8;
  border-bottom: 1px solid #bbb;

  svg {
    margin-left: auto;
  }
`;

const ColHead = styled.th`
  height: 13px;
  border-right: 1px solid #d8d8d8;
  border-bottom: 1px solid ${({ $on }) => ($on ? green : '#bbb')};
  background: ${({ $on }) => ($on ? '#e1e1e1' : '#fff')};
  color: ${({ $on }) => ($on ? green : '#555')};
  font-weight: ${({ $on }) => ($on ? 'bold' : 'normal')};
`;

const RowHead = styled.th`
  border-right: 1px solid ${({ $on }) => ($on ? green : '#bbb')};
  border-bottom: 1px solid #e0e0e0;
  background: ${({ $on }) => ($on ? '#e1e1e1' : '#fff')};
  color: ${({ $on }) => ($on ? green : '#555')};
  font-size: 12px;
  font-weight: ${({ $on }) => ($on ? 'bold' : 'normal')};
`;

const Cell = styled.td`
  overflow: hidden;
  border-right: 1px solid #dcdcdc;
  border-bottom: 1px solid #dcdcdc;
  ${({ $on }) =>
    $on &&
    css`
      background: #c6c6c6;
      border-color: #b8b8b8;
    `}
  && {
    padding: 0 2px;
  }
  ${({ $number }) => $number && 'font-size: 12px; text-align: right;'}
`;

const VerticalScroll = styled.div`
  width: 11px;
  display: flex;
  flex-direction: column;
  padding-top: 1px;
  background: #f0f0f0;
`;

const ScrollButton = styled.button`
  width: 11px;
  height: 11px;
  flex: none;
  display: flex;
  align-items: center;
  justify-content: center;
  border: 1px solid #c0c0c0;
  background: #fff;
`;

const VerticalThumb = styled.div`
  flex: 1;
  margin-bottom: 14px;
  border: 1px solid #c0c0c0;
  background: #fff;
`;

const SheetBar = styled.div`
  height: 20px;
  flex: none;
  display: flex;
  align-items: stretch;
  padding-right: 16px;
  border-top: 1px solid #c8c8c8;
  background: #f4f4f4;
`;

const SheetNav = styled.div`
  width: 74px;
  display: flex;
  align-items: center;
  gap: 18px;
  margin: 2px 0;
  padding-left: 20px;
  border-right: 1px solid #aaa;
`;

const SheetTab = styled.button`
  width: 50px;
  margin-bottom: 3px;
  border-right: 1px solid #bbb;
  font-size: 10px;
  ${({ $active }) =>
    $active &&
    css`
      margin-top: -1px;
      padding-top: 3px;
      background: #fff;
      border-bottom: 2px solid ${green};
      color: ${green};
    `}
`;

const AddSheet = styled.button`
  margin: 0 auto 0 24px;
`;

const HorizontalScroll = styled.div`
  width: 38%;
  display: flex;
  align-items: center;
  align-self: center;
  margin-left: 8px;
  max-width: 372px;
  background: #e8e8e8;
`;

const HorizontalThumb = styled.div`
  flex: 1;
  height: 11px;
  margin-right: 20px;
  border: 1px solid #c0c0c0;
  background: #fff;
`;

const StatusBar = styled.footer`
  height: 16px;
  flex: none;
  display: flex;
  align-items: center;
  padding: 0 7px 0 5px;
  background: ${green};
  color: #fff;
`;

const Ready = styled.span`
  margin-right: auto;
`;

const Stats = styled.div`
  display: flex;
  gap: 12px;
  margin-right: 13px;
`;

const ViewButton = styled.button`
  width: 28px;
  height: 16px;
  display: flex;
  align-items: center;
  justify-content: center;
  background: ${({ $active }) => ($active ? '#0a5c2e' : 'transparent')};
`;

const Zoom = styled.div`
  display: flex;
  align-items: center;
  gap: 2px;
  margin: 0 11px 0 3px;
`;

const ZoomSlider = styled.input`
  width: 74px;
  height: 10px;
  appearance: none;

  &::-webkit-slider-runnable-track {
    height: 1px;
    background: #cfe0d6;
  }

  &::-webkit-slider-thumb {
    appearance: none;
    width: 3px;
    height: 8px;
    margin-top: -4px;
    background: #fff;
  }
`;

const Taskbar = styled.div`
  height: 6px;
  flex: none;
  display: flex;
  justify-content: space-between;
  overflow: hidden;
  padding-right: 28px;
  background: #1b1219;
`;

const Clock = styled.span`
  color: #fff;
  font-size: 8px;
  line-height: 15px;
`;

const Dialog = styled.div`
  position: absolute;
  left: 250px;
  top: 46px;
  width: 474px;
  height: 445px;
  display: flex;
  flex-direction: column;
  padding: 0 4px 4px;
  border: 1px solid #555;
  border-radius: 5px;
  background: rgba(240, 240, 240, 0.72);
  backdrop-filter: blur(3px);
  box-shadow: 0 1px 10px 2px rgba(0, 0, 0, 0.55), inset 0 0 0 1px #fff;
  color: #111;
`;

const DialogTitle = styled.div`
  height: 21px;
  flex: none;
  display: flex;
  align-items: center;
  justify-content: space-between;
`;

const WindowButtons = styled.div`
  display: flex;
  align-self: flex-start;
  border: 1px solid #888;
  border-top: 0;
  border-radius: 0 0 4px 4px;
  background: linear-gradient(#f4f4f4, #cfcfcf);

  button {
    width: 20px;
    height: 13px;
    display: flex;
    align-items: center;
    justify-content: center;
    color: #444;
    font-weight: bold;
  }

  button + button {
    width: 34px;
    border-left: 1px solid #aaa;
  }
`;

const DialogBody = styled.div`
  position: relative;
  flex: 1;
  min-height: 0;
  display: flex;
  flex-direction: column;
  padding: 6px 5px 7px;
  border: 1px solid #8a8a8a;
  background: #f0f0f0;
`;

const DialogTabs = styled.div`
  position: relative;
  display: flex;
  align-items: flex-end;
`;

const DialogTab = styled.button`
  height: 14px;
  width: 51px;
  border: 1px solid #999;
  border-bottom: 0;
  background: linear-gradient(#f2f2f2, #d6d6d6);
  ${({ $active }) =>
    $active &&
    css`
      position: relative;
      z-index: 1;
      height: 16px;
      width: 48px;
      margin-bottom: -1px;
      padding-bottom: 1px;
      background: #fff;
    `}
`;

const Highlight = styled.div`
  position: absolute;
  z-index: 2;
  left: 40px;
  top: -18px;
  width: 85px;
  height: 45px;
  border: 5px solid #fb3939;
  pointer-events: none;
`;

const Panel = styled.div`
  flex: 1;
  min-height: 0;
  display: flex;
  padding: 9px 8px 11px;
  border: 1px solid #a9a9b2;
  background: #fff;
`;

const TypeList = styled.div`
  width: 86px;
  flex: none;
  display: grid;
  grid-template-rows: repeat(12, 1fr);
  align-self: flex-start;
  height: 211px;
  margin-right: -1px;
  padding-right: 8px;
`;

const TypeButton = styled.button`
  display: flex;
  align-items: center;
  gap: 7px;
  padding: 0 2px;
  border: 1px solid ${({ $active }) => ($active ? '#9ed5b6' : 'transparent')};
  background: ${({ $active }) => ($active ? '#d3f0e0' : 'transparent')};
  color: #666;
`;

const TypeDetail = styled.div`
  flex: 1;
  min-width: 0;
  padding-left: 7px;
  border-left: 1px solid #d5d5da;
`;

const SubtypeRow = styled.div`
  display: flex;
  margin-right: 1px;
  padding-bottom: 5px;
  border-bottom: 1px solid #dcdcdc;
`;

const SubtypeButton = styled.button`
  background: ${({ $active }) => ($active ? '#9fd5b7' : 'transparent')};
`;

const SubtypeName = styled.h2`
  margin: 0;
  color: #222;
  font-size: 13px;
  font-weight: normal;
  line-height: 24px;
`;

const Previews = styled.div`
  display: flex;
  align-items: center;
  gap: 3px;
`;

const PreviewButton = styled.button`
  width: ${({ $active }) => ($active ? 164 : 160)}px;
  border: ${({ $active }) => ($active ? '3px solid #9fd5b7' : '1px solid #ddd')};
  background: #fff;
`;

const PreviewSvg = styled.svg`
  width: 100%;

  text {
    fill: #555;
  }
`;

const DialogFooter = styled.div`
  display: flex;
  justify-content: flex-end;
  gap: 7px;
  padding-top: 5px;
`;

const DialogButton = styled.button`
  width: 54px;
  height: 18px;
  border: 1px solid #b5b5b5;
  background: linear-gradient(#ececec, #e2e2e2 45%, #c9c9c9 50%, #dedede);
  box-shadow: inset 0 0 0 1px #f4f4f4;
`;

const ResizeGrip = styled.div`
  position: absolute;
  right: 1px;
  bottom: 1px;
  border: 2px solid transparent;
  border-right-color: #444;
  border-bottom-color: #444;
`;

const SideHandle = styled.div`
  position: absolute;
  left: 0;
  top: 325px;
  width: 8px;
  height: 43px;
  border: 1px solid #333;
  border-radius: 0 3px 3px 0;
  background: linear-gradient(90deg, #333, #777);
`;

const Thermometer = styled.div`
  position: absolute;
  right: 0;
  top: 215px;
`;

const WatermarkSvg = styled.svg`
  position: absolute;
  right: 54px;
  bottom: 19px;
  width: 180px;
  height: 90px;
  pointer-events: none;
  font-family: "Liberation Sans", "Noto Sans CJK SC", sans-serif;
`;
